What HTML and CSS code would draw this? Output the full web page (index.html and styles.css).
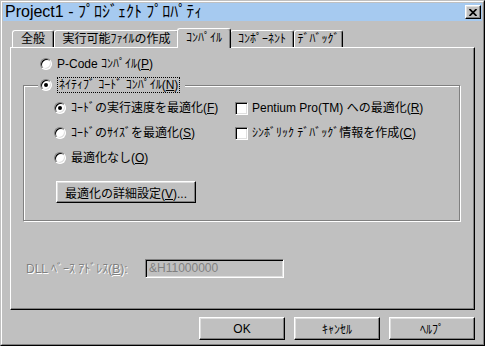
FILE: index.html
```html
<!DOCTYPE html>
<html lang="ja">
<head>
<meta charset="UTF-8">
<title>Project1 - ﾌﾟﾛｼﾞｪｸﾄ ﾌﾟﾛﾊﾟﾃｨ</title>
<link rel="stylesheet" href="styles.css">
</head>
<body>
<div class="window">
  <div class="frame">
    <div class="titlebar">
      <span class="title">Project1 - ﾌﾟﾛｼﾞｪｸﾄ ﾌﾟﾛﾊﾟﾃｨ</span>
      <span class="close-btn">
        <svg width="8" height="7" viewBox="0 0 8 7"><path d="M0.5 0 L7.5 7 M7.5 0 L0.5 7" stroke="#000" stroke-width="1.7" fill="none"/></svg>
      </span>
    </div>

    <div class="body">
      <div class="tabs">
        <div class="tab tab-general">全般</div>
        <div class="tab tab-make">実行可能ﾌｧｲﾙの作成</div>
        <div class="tab tab-compile active">ｺﾝﾊﾟｲﾙ</div>
        <div class="tab tab-component">ｺﾝﾎﾟｰﾈﾝﾄ</div>
        <div class="tab tab-debug">ﾃﾞﾊﾞｯｸﾞ</div>
      </div>

      <div class="panel">
        <div class="option pcode"><span class="radio"></span><span>P-Code ｺﾝﾊﾟｲﾙ(<u>P</u>)</span></div>

        <fieldset class="group">
          <legend class="option"><span class="radio checked"></span><span class="focus">ﾈｲﾃｨﾌﾞ ｺｰﾄﾞ ｺﾝﾊﾟｲﾙ(<u>N</u>)</span></legend>
          <div class="group-body">
            <div class="col-left">
              <div class="option"><span class="radio checked"></span><span>ｺｰﾄﾞの実行速度を最適化(<u>F</u>)</span></div>
              <div class="option"><span class="radio"></span><span>ｺｰﾄﾞのｻｲｽﾞを最適化(<u>S</u>)</span></div>
              <div class="option"><span class="radio"></span><span>最適化なし(<u>O</u>)</span></div>
              <button class="btn btn-advanced">最適化の詳細設定(<u>V</u>)...</button>
            </div>
            <div class="col-right">
              <div class="option"><span class="check"></span><span>Pentium Pro(TM) への最適化(<u>R</u>)</span></div>
              <div class="option"><span class="check"></span><span>ｼﾝﾎﾞﾘｯｸ ﾃﾞﾊﾞｯｸﾞ情報を作成(<u>C</u>)</span></div>
            </div>
          </div>
        </fieldset>

        <div class="dll-row">
          <span class="disabled-label">DLL ﾍﾞｰｽ ｱﾄﾞﾚｽ(<u>B</u>):</span>
          <span class="textbox">&amp;H11000000</span>
        </div>
      </div>

      <div class="buttons">
        <button class="btn">OK</button>
        <button class="btn">ｷｬﾝｾﾙ</button>
        <button class="btn">ﾍﾙﾌﾟ</button>
      </div>
    </div>
  </div>
</div>
</body>
</html>
```

FILE: styles.css
```css
body {
  margin: 0;
  background-color: #c0c0c0;
  font-family: "Liberation Sans", "Noto Sans CJK JP", sans-serif;
  font-size: 12px;
  line-height: 16px;
  color: #000;
}

.window {
  width: 485px;
  height: 346px;
  box-sizing: border-box;
  border: 1px solid;
  border-color: #c0c0c0 #000 #000 #c0c0c0;
  background-color: #c0c0c0;
}

.frame {
  height: 100%;
  box-sizing: border-box;
  border: 1px solid;
  border-color: #fff #808080 #808080 #fff;
  padding: 1px;
  display: flex;
  flex-direction: column;
}

/* title bar */
.titlebar {
  height: 18px;
  flex-shrink: 0;
  background-color: #a6caf0;
  display: flex;
  align-items: center;
  justify-content: space-between;
  padding: 0 1px 0 2px;
}
.title {
  font-size: 16px;
  line-height: 18px;
  white-space: nowrap;
}
.close-btn {
  width: 16px;
  height: 14px;
  box-sizing: border-box;
  border: 1px solid;
  border-color: #fff #000 #000 #fff;
  box-shadow: inset -1px -1px 0 #808080, inset 1px 1px 0 #dfdfdf;
  background-color: #c0c0c0;
  display: flex;
  align-items: center;
  justify-content: center;
}

.body {
  flex: 1;
  display: flex;
  flex-direction: column;
  padding: 7px 7px 3px;
}

/* tabs */
.tabs {
  height: 19px;
  display: flex;
  align-items: flex-end;
  padding-left: 2px;
  position: relative;
  z-index: 1;
}
.tab {
  height: 17px;
  box-sizing: border-box;
  border: 1px solid;
  border-bottom: none;
  border-color: #fff #000 #000 #fff;
  border-radius: 3px 3px 0 0;
  box-shadow: inset -1px 0 0 #808080;
  background-color: #c0c0c0;
  display: flex;
  align-items: center;
  justify-content: center;
  white-space: nowrap;
}
.tab-general { width: 42px; }
.tab-make { width: 125px; }
.tab-compile { width: 51px; }
.tab-component { width: 64px; }
.tab-debug { width: 49px; }
.tab.active {
  height: 20px;
  width: 54px;
  margin: 0 -1px -1px -2px;
  align-items: flex-start;
  padding-top: 1px;
  position: relative;
  z-index: 2;
}

/* page */
.panel {
  height: 263px;
  box-sizing: border-box;
  border: 1px solid;
  border-color: #fff #000 #000 #fff;
  box-shadow: inset -1px -1px 0 #808080;
}

.option {
  display: flex;
  align-items: center;
  gap: 5px;
  height: 16px;
  white-space: nowrap;
}
.pcode {
  margin: 8px 0 0 29px;
}

.radio {
  width: 12px;
  height: 12px;
  box-sizing: border-box;
  flex-shrink: 0;
  border-radius: 50%;
  background-color: #fff;
  border: 1px solid;
  border-color: #808080 #fff #fff #808080;
  box-shadow: inset 1px 1px 0 #000, inset -1px -1px 0 #dfdfdf;
  display: flex;
  align-items: center;
  justify-content: center;
}
.radio.checked::after {
  content: "";
  width: 4px;
  height: 4px;
  border-radius: 50%;
  background-color: #000;
}

.check {
  width: 13px;
  height: 13px;
  box-sizing: border-box;
  flex-shrink: 0;
  background-color: #fff;
  border: 1px solid;
  border-color: #808080 #fff #fff #808080;
  box-shadow: inset 1px 1px 0 #000, inset -1px -1px 0 #dfdfdf;
}

/* group box */
.group {
  margin: 5px 0 0 12px;
  width: 437px;
  box-sizing: border-box;
  padding: 0;
  border: 1px solid #808080;
  box-shadow: 1px 1px 0 #fff, inset 1px 1px 0 #fff;
  min-width: 0;
}
.group legend {
  margin-left: 14px;
  padding: 0 5px 0 2px;
  height: 16px;
  background-color: #c0c0c0;
}
.focus {
  border: 1px dotted #000;
  padding: 0 1px;
  line-height: 14px;
}

.group-body {
  display: flex;
  padding: 7px 0 17px 30px;
}
.col-left {
  width: 181px;
  display: flex;
  flex-direction: column;
  gap: 9px;
}
.col-right {
  display: flex;
  flex-direction: column;
  gap: 9px;
}
.col-right .option {
  gap: 4px;
}

.btn {
  font-family: inherit;
  font-size: 12px;
  color: #000;
  background-color: #c0c0c0;
  border: 1px solid;
  border-color: #fff #000 #000 #fff;
  box-shadow: inset -1px -1px 0 #808080, inset 1px 1px 0 #dfdfdf;
  padding: 0;
  border-radius: 0;
  white-space: nowrap;
}
.btn-advanced {
  width: 140px;
  height: 22px;
  margin: 6px 0 0 2px;
}

/* dll base address */
.dll-row {
  display: flex;
  align-items: center;
  margin: 38px 0 0 15px;
}
.disabled-label {
  width: 119px;
  color: #808080;
  text-shadow: 1px 1px 0 #fff;
  white-space: nowrap;
}
.textbox {
  width: 139px;
  height: 19px;
  box-sizing: border-box;
  border: 1px solid;
  border-color: #808080 #fff #fff #808080;
  box-shadow: inset 1px 1px 0 #000, inset -1px -1px 0 #dfdfdf;
  color: #808080;
  padding-left: 3px;
  line-height: 17px;
}

/* bottom buttons */
.buttons {
  display: flex;
  justify-content: flex-end;
  gap: 9px;
  margin-top: 7px;
}
.buttons .btn {
  width: 86px;
  height: 23px;
}
```
